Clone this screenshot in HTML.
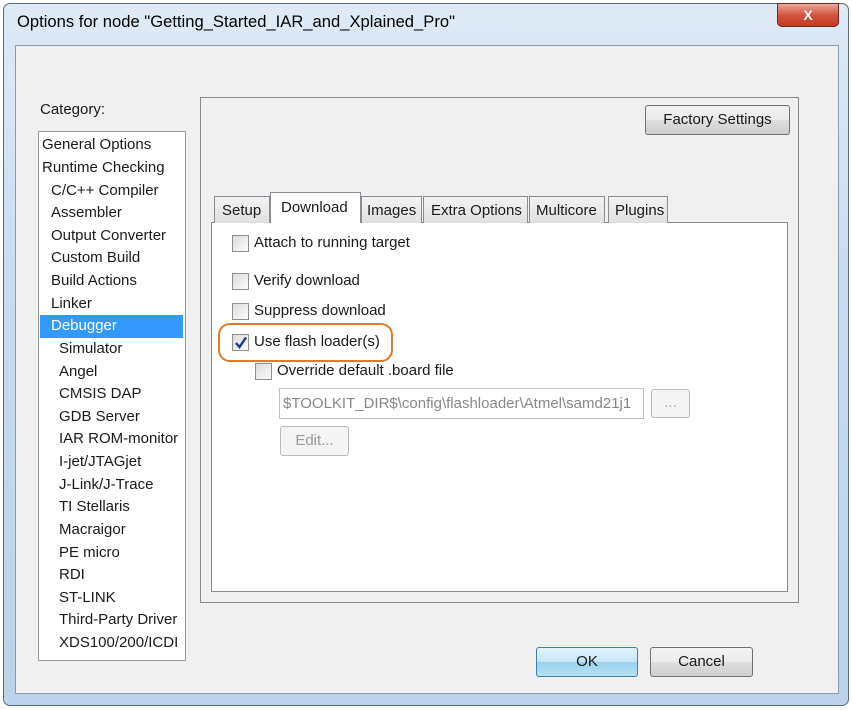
<!DOCTYPE html>
<html><head><style>
*{margin:0;padding:0;box-sizing:border-box}
body{width:852px;height:710px;background:#fff;position:relative;overflow:hidden;font-family:"Liberation Sans",sans-serif;font-size:15px;color:#1a1a1a}
.a{position:absolute}
.win{left:3px;top:3px;width:846px;height:703px;border:1px solid #5a6a80;border-radius:7px;background:linear-gradient(#dfeaf6,#c9dbef 40%,#bcd2ea);}
.client{left:15px;top:45px;width:824px;height:649px;background:#f0f0f0;border:1px solid #8a9bb0}
.btn{border:1px solid #707070;border-radius:3px;background:linear-gradient(#f2f2f2 0%,#ebebeb 50%,#dddddd 51%,#cfcfcf 100%);text-align:center}
.list div{position:absolute;white-space:nowrap}
.cb{width:17px;height:17px;border:1px solid #8e8f8f;background:linear-gradient(135deg,#dcdcdc,#fbfbfb)}
.tab{top:196px;height:27px;border:1px solid #898c95;border-bottom:none;background:linear-gradient(#f3f3f3,#e0e0e0);padding:5px 0 0 7px;font-size:15px;white-space:nowrap}
</style></head><body>
<div class="a win"></div>
<div class="a" style="left:17px;top:12px;font-size:16.6px;color:#000">Options for node "Getting_Started_IAR_and_Xplained_Pro"</div>
<div class="a" style="left:777px;top:3px;width:62px;height:24px;border:1px solid #6b2a22;border-radius:0 0 5px 5px;background:linear-gradient(#e9a99c,#d2553f 50%,#c23a22);color:#fff;font-weight:bold;text-align:center;font-size:14px;line-height:22px">X</div>
<div class="a client"></div>
<div class="a" style="left:40px;top:101px">Category:</div>
<div class="a list" style="left:38px;top:131px;width:148px;height:530px;background:#fff;border:1px solid #9a9a9a">
<div style="left:1px;top:183px;width:143px;height:23px;background:#3399ff"></div>
<div style="left:3px;top:4px">General Options</div>
<div style="left:3px;top:27px">Runtime Checking</div>
<div style="left:12px;top:50px">C/C++ Compiler</div>
<div style="left:12px;top:72px">Assembler</div>
<div style="left:12px;top:95px">Output Converter</div>
<div style="left:12px;top:117px">Custom Build</div>
<div style="left:12px;top:140px">Build Actions</div>
<div style="left:12px;top:163px">Linker</div>
<div style="left:12px;top:185px;color:#fff">Debugger</div>
<div style="left:20px;top:208px">Simulator</div>
<div style="left:20px;top:231px">Angel</div>
<div style="left:20px;top:253px">CMSIS DAP</div>
<div style="left:20px;top:276px">GDB Server</div>
<div style="left:20px;top:298px">IAR ROM-monitor</div>
<div style="left:20px;top:321px">I-jet/JTAGjet</div>
<div style="left:20px;top:344px">J-Link/J-Trace</div>
<div style="left:20px;top:366px">TI Stellaris</div>
<div style="left:20px;top:389px">Macraigor</div>
<div style="left:20px;top:412px">PE micro</div>
<div style="left:20px;top:434px">RDI</div>
<div style="left:20px;top:457px">ST-LINK</div>
<div style="left:20px;top:479px">Third-Party Driver</div>
<div style="left:20px;top:502px">XDS100/200/ICDI</div>
</div>
<div class="a" style="left:200px;top:97px;width:599px;height:506px;border:1px solid #8a8a8a;background:#f0f0f0"></div>
<div class="a btn" style="left:645px;top:105px;width:145px;height:30px;line-height:28px">Factory Settings</div>
<div class="a" style="left:211px;top:222px;width:577px;height:370px;background:#fff;border:1px solid #898c95"></div>
<div class="a tab" style="left:214px;width:56px">Setup</div>
<div class="a tab" style="left:270px;top:192px;height:31px;width:91px;background:#fff;padding-top:6px;padding-left:10px">Download</div>
<div class="a tab" style="left:361px;width:61px;padding-left:5px">Images</div>
<div class="a tab" style="left:423px;width:105px">Extra Options</div>
<div class="a tab" style="left:529px;width:76px;padding-left:6px">Multicore</div>
<div class="a tab" style="left:608px;width:60px;padding-left:6px">Plugins</div>
<div class="a cb" style="left:232px;top:235px"></div><div class="a" style="left:254px;top:234px">Attach to running target</div>
<div class="a cb" style="left:232px;top:273px"></div><div class="a" style="left:254px;top:272px">Verify download</div>
<div class="a cb" style="left:232px;top:303px"></div><div class="a" style="left:254px;top:302px">Suppress download</div>
<div class="a cb" style="left:232px;top:334px"></div>
<svg class="a" style="left:233px;top:335px" width="16" height="16"><path d="M3 8 L6.5 12 L13 2.5" stroke="#1c3d8c" stroke-width="2.4" fill="none"/></svg>
<div class="a" style="left:254px;top:333px">Use flash loader(s)</div>
<div class="a" style="left:218px;top:323px;width:175px;height:39px;border:2px solid #e07a2a;border-radius:12px"></div>
<div class="a cb" style="left:255px;top:363px"></div><div class="a" style="left:277px;top:362px">Override default .board file</div>
<div class="a" style="left:279px;top:388px;width:365px;height:31px;border:1px solid #c0c0c0;background:#fff;color:#888;padding:6px 0 0 3px;white-space:nowrap;overflow:hidden">$TOOLKIT_DIR$\config\flashloader\Atmel\samd21j1</div>
<div class="a" style="left:651px;top:389px;width:39px;height:29px;border:1px solid #bbb;border-radius:3px;background:#f4f4f4;color:#aaa;text-align:center;line-height:26px">...</div>
<div class="a" style="left:280px;top:426px;width:69px;height:30px;border:1px solid #bbb;border-radius:3px;background:#f4f4f4;color:#999;text-align:center;line-height:28px">Edit...</div>
<div class="a btn" style="left:536px;top:647px;width:102px;height:30px;line-height:28px;border-color:#3c7fb1;background:linear-gradient(#e5f4fc,#c4e5f6 50%,#98d1ef 51%,#b7e0f4)">OK</div>
<div class="a btn" style="left:650px;top:647px;width:103px;height:30px;line-height:28px">Cancel</div>
</body></html>
